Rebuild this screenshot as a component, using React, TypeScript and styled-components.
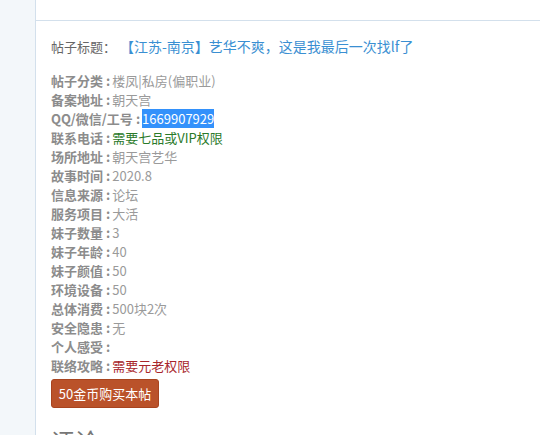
import React from "react";
import styled, { createGlobalStyle } from "styled-components";

const GlobalStyle = createGlobalStyle`
  html, body {
    margin: 0;
    padding: 0;
    background: #ffffff;
    font-family: "Noto Sans CJK SC", "Microsoft YaHei", sans-serif;
    overflow: hidden;
  }
`;

const Page = styled.div`
  display: flex;
  width: 540px;
  height: 435px;
  overflow: hidden;
`;

const Sidebar = styled.div`
  width: 35px;
  flex-shrink: 0;
  background: #f3f7fa;
  border-right: 1px solid #d3e0ec;
`;

const Main = styled.div`
  flex: 1;
  display: flex;
  flex-direction: column;
`;

const TopBar = styled.div`
  height: 20px;
  flex-shrink: 0;
  border-bottom: 1px solid #d3e0ec;
`;

const Content = styled.div`
  padding: 15px 15px 0;
`;

const TitleRow = styled.div`
  display: flex;
  align-items: baseline;
  line-height: 20px;
  margin-bottom: 14px;
  white-space: nowrap;
`;

const TitleLabel = styled.span`
  font-size: 13px;
  color: #666666;
`;

const TitleLink = styled.span`
  margin-left: 4px;
  font-size: 14px;
  color: #3a8fd2;
`;

const Row = styled.div`
  font-size: 13px;
  line-height: 19px;
  color: #9a9a9a;
  white-space: nowrap;
`;

const Label = styled.span`
  font-weight: bold;
  color: #8c8c8c;
`;

const Colon = styled.span`
  font-weight: bold;
  color: #8c8c8c;
  margin: 0 2px 0 3px;
`;

type Tone = "plain" | "green" | "red" | "selected";

const Value = styled.span<{ $tone: Tone }>`
  color: ${(p) =>
    p.$tone === "green"
      ? "#2a7a2a"
      : p.$tone === "red"
      ? "#a8262b"
      : p.$tone === "selected"
      ? "#ffffff"
      : "#9a9a9a"};
  background: ${(p) => (p.$tone === "selected" ? "#3391fb" : "transparent")};
`;

const BuyButton = styled.button`
  display: block;
  margin-top: 4px;
  width: 108px;
  height: 29px;
  padding: 0;
  border: 1px solid #a8441f;
  border-radius: 3px;
  background: #ba522a;
  color: #ffffff;
  font-family: inherit;
  font-size: 13px;
  cursor: pointer;
`;

const SectionHeading = styled.h2`
  margin: 18px 0 0;
  font-size: 24px;
  font-weight: normal;
  color: #777777;
  line-height: 30px;
`;

const rows: { label: string; value: string; tone?: Tone }[] = [
  { label: "帖子分类", value: "楼凤|私房(偏职业)" },
  { label: "备案地址", value: "朝天宫" },
  { label: "QQ/微信/工号", value: "1669907929", tone: "selected" },
  { label: "联系电话", value: "需要七品或VIP权限", tone: "green" },
  { label: "场所地址", value: "朝天宫艺华" },
  { label: "故事时间", value: "2020.8" },
  { label: "信息来源", value: "论坛" },
  { label: "服务项目", value: "大活" },
  { label: "妹子数量", value: "3" },
  { label: "妹子年龄", value: "40" },
  { label: "妹子颜值", value: "50" },
  { label: "环境设备", value: "50" },
  { label: "总体消费", value: "500块2次" },
  { label: "安全隐患", value: "无" },
  { label: "个人感受", value: "" },
  { label: "联络攻略", value: "需要元老权限", tone: "red" },
];

export default function App() {
  return (
    <>
      <GlobalStyle />
      <Page>
        <Sidebar />
        <Main>
          <TopBar />
          <Content>
            <TitleRow>
              <TitleLabel>帖子标题：</TitleLabel>
              <TitleLink>【江苏-南京】艺华不爽，这是我最后一次找lf了</TitleLink>
            </TitleRow>
            {rows.map((r) => (
              <Row key={r.label}>
                <Label>{r.label}</Label>
                <Colon>:</Colon>
                <Value $tone={r.tone ?? "plain"}>{r.value}</Value>
              </Row>
            ))}
            <BuyButton>50金币购买本帖</BuyButton>
            <SectionHeading>评论</SectionHeading>
          </Content>
        </Main>
      </Page>
    </>
  );
}
